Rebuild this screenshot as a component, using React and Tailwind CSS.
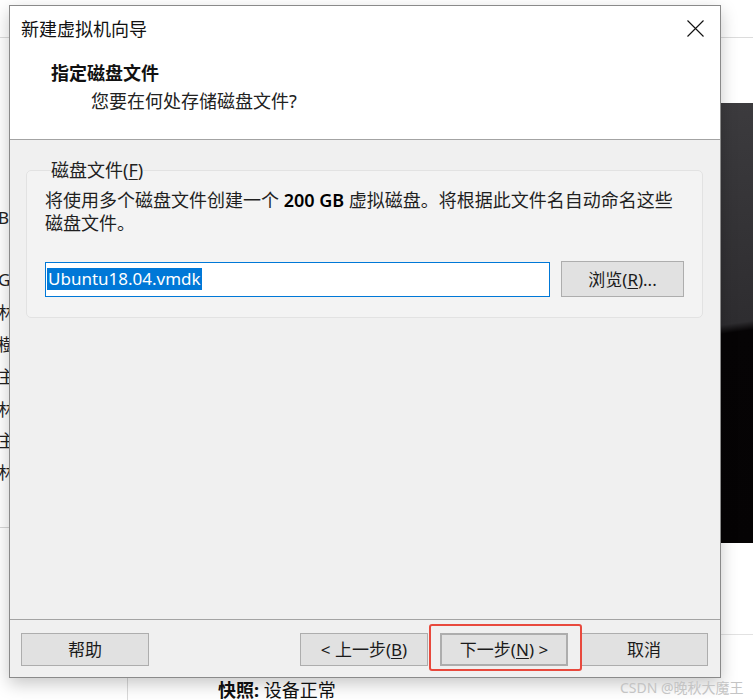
import React from 'react';

const UI = "font-['Noto_Sans','Noto_Sans_CJK_SC',sans-serif]";

// fragments of the VMware page that peek out left of the dialog
const LEFT_BITS = [
  { t: 'B', y: 'top-[206px]' },
  { t: 'GB', y: 'top-[268px]' },
  { t: '林', y: 'top-[301px]' },
  { t: '樹', y: 'top-[333px]' },
  { t: '主', y: 'top-[365px]' },
  { t: '林', y: 'top-[398px]' },
  { t: '主', y: 'top-[429px]' },
  { t: '林', y: 'top-[461px]' },
];

function Btn({ children, size = 'h-[33px] w-[128px]', className = '' }) {
  return (
    <div
      className={`flex ${size} items-center justify-center border border-[#adadad] bg-[#e1e1e1] text-[17px] leading-none text-[#1b1b1b] ${className}`}
    >
      {children}
    </div>
  );
}

function CloseIcon() {
  return (
    <svg width="17" height="17" viewBox="0 0 17 17" fill="none">
      <path d="M0.5 0.5L16.5 16.5M16.5 0.5L0.5 16.5" stroke="#111" strokeWidth="1.1" />
    </svg>
  );
}

function Dialog() {
  return (
    <div className="absolute left-[9px] top-[5px] flex h-[673px] w-[712px] flex-col border border-[#8a8a8a] bg-[#f0f0f0] shadow-[0_6px_16px_rgba(0,0,0,0.22)]">
      {/* title + header */}
      <div className="bg-white">
        <div className="flex h-[45px] items-center justify-between pl-[11px] pr-[16px]">
          <span className="text-[18px] leading-none text-[#111]">新建虚拟机向导</span>
          <CloseIcon />
        </div>
        <div className="flex h-[88px] flex-col pl-[41px] pt-[10px]">
          <span className="text-[18px] font-bold leading-[24px] text-[#111]">指定磁盘文件</span>
          <span className="mt-[4px] pl-[40px] text-[18px] leading-[24px] text-[#222]">
            您要在何处存储磁盘文件?
          </span>
        </div>
      </div>
      <div className="h-px bg-[#a3a3a3]" />

      {/* body */}
      <div className="flex-1 pl-[16px] pr-[17px] pt-[19px]">
        <fieldset className="rounded-[5px] border border-[#e2e2e2] bg-[#f3f3f3] px-[18px] pb-[20px] pt-[8px]">
          <legend className="ml-[6px] text-[18px] leading-[22px] text-[#222]">
            磁盘文件(<span className="underline underline-offset-2">F</span>)
          </legend>
          <p className="text-[18px] leading-[23px] text-[#1f1f1f]">
            将使用多个磁盘文件创建一个 <b className="font-semibold text-black">200 GB</b> 虚拟磁盘。将根据此文件名自动命名这些磁盘文件。
          </p>
          <div className="mt-[26px] flex items-center gap-[11px]">
            <div className="flex h-[35px] w-[505px] items-center border border-[#0078d7] bg-white pl-px">
              <span className="bg-[#0078d7] px-px text-[17px] leading-[22px] text-white">Ubuntu18.04.vmdk</span>
            </div>
            <Btn size="h-[36px] w-[123px]">
              浏览(<span className="underline underline-offset-2">R</span>)...
            </Btn>
          </div>
        </fieldset>
      </div>

      {/* footer */}
      <div className="h-px bg-[#a3a3a3]" />
      <div className="flex h-[57px] items-start pl-[11px] pr-[12px] pt-[13px]">
        <Btn>帮助</Btn>
        <div className="ml-auto flex gap-[12px]">
          <Btn>
            &lt; 上一步(<span className="underline underline-offset-2">B</span>)
          </Btn>
          <Btn className="border-2 border-[#0078d7]">
            下一步(<span className="underline underline-offset-2">N</span>) &gt;
          </Btn>
          <Btn>取消</Btn>
        </div>
      </div>
    </div>
  );
}

export default function App() {
  return (
    <div className={`relative h-[700px] w-[753px] overflow-hidden bg-white ${UI}`}>
      {/* desktop behind the wizard */}
      <div className="absolute left-0 top-[37px] h-px w-full bg-[#dcdcdc]" />
      <div className="absolute left-0 top-[527px] h-px w-[20px] bg-[#d6d6d6]" />
      {LEFT_BITS.map((b, i) => (
        <span key={i} className={`absolute left-[-2px] ${b.y} text-[17px] leading-[24px] text-[#222]`}>
          {b.t}
        </span>
      ))}
      <div className="absolute right-0 top-[103px] h-[440px] w-[33px] bg-[linear-gradient(172deg,#3c3b3e_0%,#2e2d30_50%,#060405_52%,#050304_100%)]" />
      <div className="absolute right-0 top-[634px] h-px w-[33px] bg-[#e2e2e2]" />
      <div className="absolute left-[127px] top-[678px] h-[22px] w-px bg-[#dadada]" />
      <div className="absolute left-[218px] top-[679px] text-[18px] leading-[22px] text-[#111]">
        <b className="font-bold">快照:</b> 设备正常
      </div>

      <Dialog />

      {/* red annotation round the Next button */}
      <div className="absolute left-[429px] top-[624px] h-[47px] w-[153px] rounded-[3px] border-2 border-[#e8493d]" />
      <div className="absolute left-[620px] top-[678px] text-[14px] leading-[20px] text-[#c4c4c4]">
        CSDN @晚秋大魔王
      </div>
    </div>
  );
}
